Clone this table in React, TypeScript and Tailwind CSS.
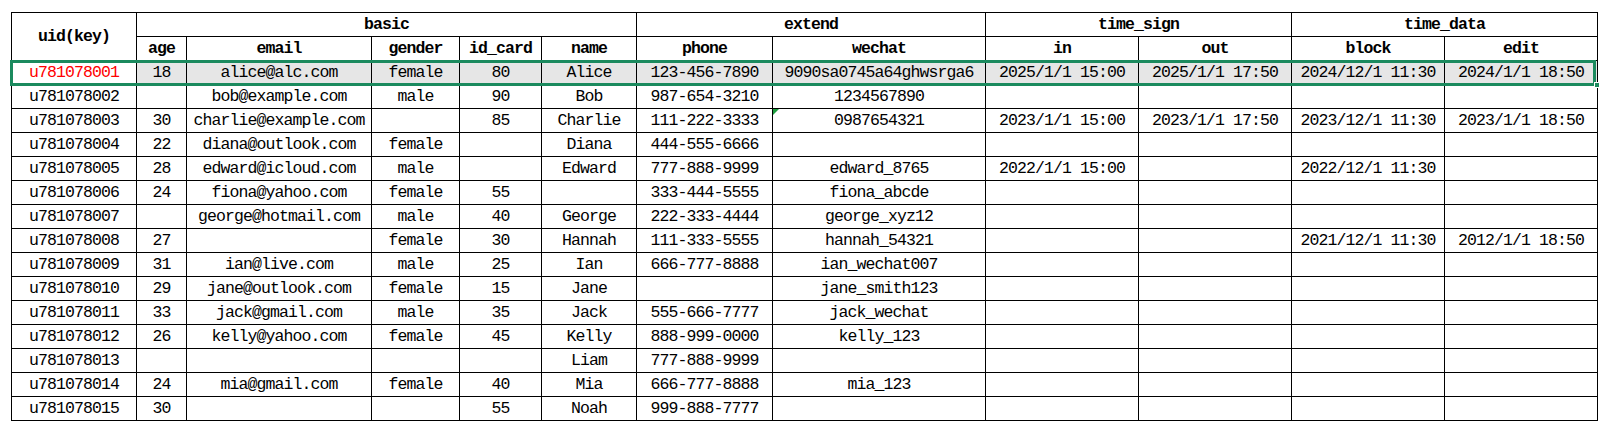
import React from "react";

type Row = string[];

const rows: Row[] = [
  ["u781078001", "18", "alice@alc.com", "female", "80", "Alice", "123-456-7890", "9090sa0745a64ghwsrga6", "2025/1/1 15:00", "2025/1/1 17:50", "2024/12/1 11:30", "2024/1/1 18:50"],
  ["u781078002", "", "bob@example.com", "male", "90", "Bob", "987-654-3210", "1234567890", "", "", "", ""],
  ["u781078003", "30", "charlie@example.com", "", "85", "Charlie", "111-222-3333", "0987654321", "2023/1/1 15:00", "2023/1/1 17:50", "2023/12/1 11:30", "2023/1/1 18:50"],
  ["u781078004", "22", "diana@outlook.com", "female", "", "Diana", "444-555-6666", "", "", "", "", ""],
  ["u781078005", "28", "edward@icloud.com", "male", "", "Edward", "777-888-9999", "edward_8765", "2022/1/1 15:00", "", "2022/12/1 11:30", ""],
  ["u781078006", "24", "fiona@yahoo.com", "female", "55", "", "333-444-5555", "fiona_abcde", "", "", "", ""],
  ["u781078007", "", "george@hotmail.com", "male", "40", "George", "222-333-4444", "george_xyz12", "", "", "", ""],
  ["u781078008", "27", "", "female", "30", "Hannah", "111-333-5555", "hannah_54321", "", "", "2021/12/1 11:30", "2012/1/1 18:50"],
  ["u781078009", "31", "ian@live.com", "male", "25", "Ian", "666-777-8888", "ian_wechat007", "", "", "", ""],
  ["u781078010", "29", "jane@outlook.com", "female", "15", "Jane", "", "jane_smith123", "", "", "", ""],
  ["u781078011", "33", "jack@gmail.com", "male", "35", "Jack", "555-666-7777", "jack_wechat", "", "", "", ""],
  ["u781078012", "26", "kelly@yahoo.com", "female", "45", "Kelly", "888-999-0000", "kelly_123", "", "", "", ""],
  ["u781078013", "", "", "", "", "Liam", "777-888-9999", "", "", "", "", ""],
  ["u781078014", "24", "mia@gmail.com", "female", "40", "Mia", "666-777-8888", "mia_123", "", "", "", ""],
  ["u781078015", "30", "", "", "55", "Noah", "999-888-7777", "", "", "", "", ""],
];

const cell = "border border-black p-0 h-[24px] text-center whitespace-nowrap overflow-hidden";
const head = cell + " font-bold";

export default function App() {
  return (
    <div
      className="relative bg-white min-h-[434px] pt-[12px] pl-[11px] text-black text-[16.5px] tracking-[-0.9px] leading-[22px]"
      style={{ fontFamily: '"Liberation Mono", "Noto Sans CJK SC", monospace' }}
    >
      <table className="border-collapse table-fixed w-[1587px]">
        <colgroup>
          <col className="w-[125px]" />
          <col className="w-[50px]" />
          <col className="w-[185px]" />
          <col className="w-[88px]" />
          <col className="w-[82px]" />
          <col className="w-[95px]" />
          <col className="w-[136px]" />
          <col className="w-[213px]" />
          <col className="w-[153px]" />
          <col className="w-[153px]" />
          <col className="w-[153px]" />
          <col className="w-[153px]" />
        </colgroup>
        <thead>
          <tr className="h-[24px]">
            <th rowSpan={2} className={head}>uid(key)</th>
            <th colSpan={5} className={head}>basic</th>
            <th colSpan={2} className={head}>extend</th>
            <th colSpan={2} className={head}>time_sign</th>
            <th colSpan={2} className={head}>time_data</th>
          </tr>
          <tr className="h-[24px]">
            {["age", "email", "gender", "id_card", "name", "phone", "wechat", "in", "out", "block", "edit"].map((h) => (
              <th key={h} className={head}>{h}</th>
            ))}
          </tr>
        </thead>
        <tbody>
          {rows.map((r, i) => (
            <tr key={r[0]} className={"h-[24px]" + (i === 0 ? " bg-[#e6e6e6]" : "")}>
              {r.map((v, j) => (
                <td
                  key={j}
                  className={
                    cell +
                    (i === 0 && j === 0 ? " bg-white text-[#ff0000]" : "") +
                    (i === 2 && j === 7 ? " relative" : "")
                  }
                >
                  {i === 2 && j === 7 && (
                    <span className="absolute left-0 top-0 w-0 h-0 border-t-[6px] border-r-[6px] border-t-[#1e9e3e] border-r-transparent" />
                  )}
                  {v}
                </td>
              ))}
            </tr>
          ))}
        </tbody>
      </table>
      {/* active row selection */}
      <div className="absolute left-[10px] top-[60px] w-[1586px] h-[26px] border-[3px] border-[#1b8a5e] pointer-events-none" />
      <div className="absolute left-[1594px] top-[82px] w-[6px] h-[6px] bg-[#1b8a5e] border border-white" />
    </div>
  );
}
